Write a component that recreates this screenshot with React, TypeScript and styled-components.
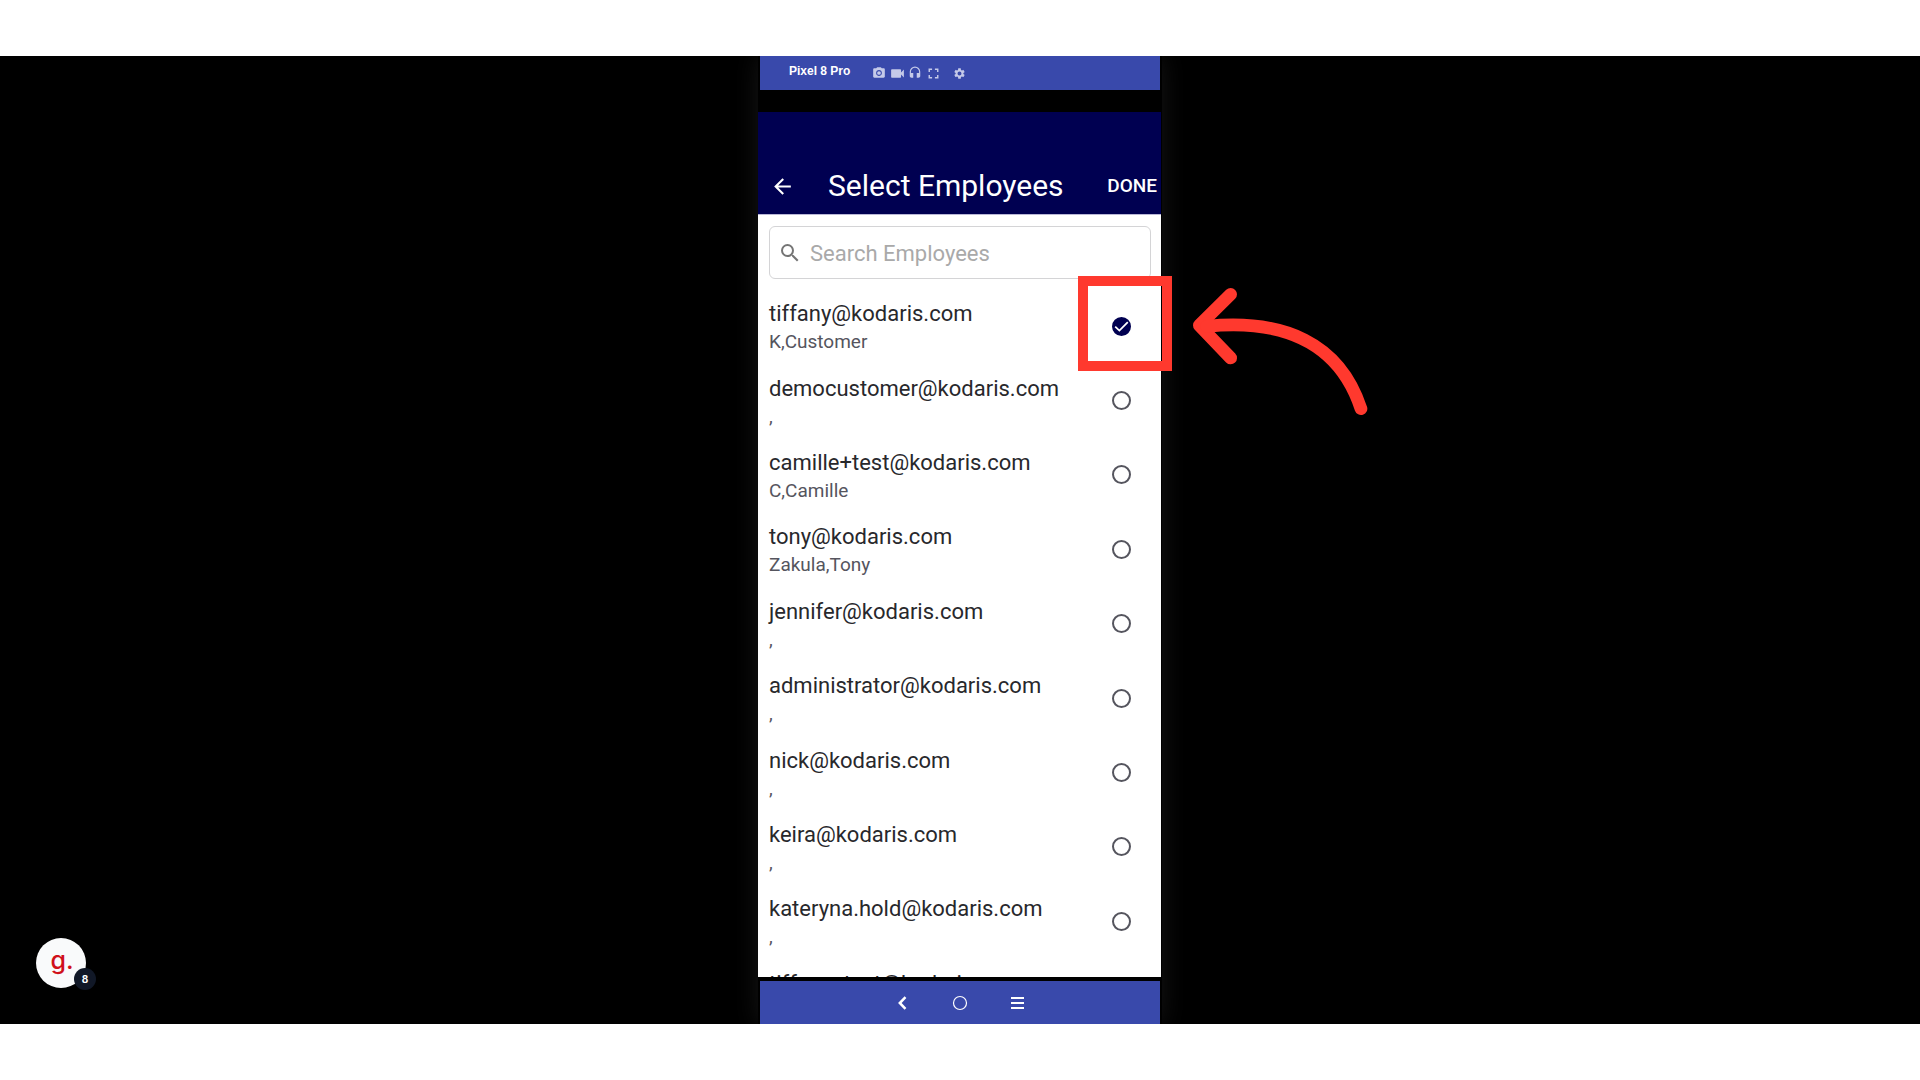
import React, { useState } from "react";
import styled, { createGlobalStyle } from "styled-components";
import {
  MdArrowBack,
  MdFullscreen,
  MdHeadset,
  MdPhotoCamera,
  MdSearch,
  MdSettings,
  MdVideocam,
} from "react-icons/md";

const GlobalStyle = createGlobalStyle`
  *, *::before, *::after { box-sizing: border-box; }
  body { margin: 0; background: #fff; font-family: Roboto, sans-serif; }
  button { border: 0; padding: 0; background: none; color: inherit; font: inherit; cursor: pointer; }
`;

const colors = {
  frame: "#3949ab",
  navy: "#000051",
  accent: "#ff392e",
};

const Page = styled.div`
  height: 100vh;
  padding: 56px 0;
  display: flex;
`;

const Stage = styled.main`
  flex: 1;
  position: relative;
  display: flex;
  justify-content: center;
  background: #000;
`;

const Device = styled.section`
  position: relative;
  width: 404px;
  display: flex;
  flex-direction: column;
  background: #000;
  box-shadow: 0 0 24px #161616;
  clip-path: inset(0 -240px 0 -40px);
`;

const DeviceBar = styled.header`
  height: 34px;
  margin: 0 2px;
  padding-left: 29px;
  display: flex;
  align-items: center;
  gap: 20px;
  background: ${colors.frame};
  color: #fff;
`;

const DeviceName = styled.span`
  padding-bottom: 4px;
  font: bold 12px/14px "Liberation Sans", Arial, sans-serif;
`;

const DeviceTools = styled.div`
  display: flex;
  color: #c5cae9;
`;

const ToolButton = styled.button<{ $spaced?: boolean }>`
  width: 18px;
  height: 18px;
  margin-left: ${(p) => (p.$spaced ? "8px" : "0")};
  display: grid;
  place-items: center;
`;

const AppScreen = styled.div`
  flex: 1;
  min-height: 0;
  margin: 22px 1px 4px 0;
  display: flex;
  flex-direction: column;
  background: #fff;
`;

const AppBar = styled.header`
  height: 103px;
  padding: 46px 4px 0 11px;
  display: flex;
  align-items: center;
  background: ${colors.navy};
  border-bottom: 1px solid #b9b7d6;
  color: #fff;
`;

const BackButton = styled.button`
  width: 26px;
  height: 56px;
  display: grid;
  place-items: center;
`;

const Title = styled.h1`
  flex: 1;
  margin: 0;
  padding-left: 33px;
  font-size: 30px;
  font-weight: 400;
  line-height: 36px;
`;

const DoneButton = styled.button`
  font-size: 19px;
  font-weight: 500;
  line-height: 24px;
`;

const SearchBox = styled.label`
  height: 53px;
  margin: 11px 10px 10px 11px;
  padding: 0 10px 0 8px;
  display: flex;
  align-items: center;
  gap: 8px;
  border: 1px solid #d4d4d6;
  border-radius: 6px;
  color: #757575;
`;

const SearchInput = styled.input`
  flex: 1;
  min-width: 0;
  padding: 2px 0 0;
  border: 0;
  outline: 0;
  background: none;
  color: #28282c;
  font: 400 22px/28px Roboto, sans-serif;
  &::placeholder { color: #a9a9a9; opacity: 1; }
`;

const ListViewport = styled.div`
  flex: 1;
  min-height: 0;
  overflow: hidden;
`;

const EmployeeList = styled.ul`
  height: 744px;
  margin: 0;
  padding: 0 30px 0 11px;
  display: grid;
  grid-auto-rows: 1fr;
  list-style: none;
`;

const EmployeeRow = styled.label`
  height: 100%;
  display: flex;
  align-items: center;
  justify-content: space-between;
  cursor: pointer;
`;

const Email = styled.span`
  display: block;
  font-size: 22px;
  line-height: 32px;
  color: #28282c;
`;

const PersonName = styled.span`
  display: block;
  font-size: 19px;
  line-height: 24px;
  color: #55555e;
`;

const Tick = styled.span`
  display: grid;
  place-items: center;
  & > * { grid-area: 1 / 1; }
  svg { pointer-events: none; }
`;

const TickInput = styled.input`
  appearance: none;
  width: 19px;
  height: 19px;
  margin: 0;
  border: 2px solid #55555e;
  border-radius: 50%;
  &:checked { background: ${colors.navy}; border-color: ${colors.navy}; }
`;

const NavBar = styled.nav`
  height: 43px;
  margin: 0 2px;
  display: flex;
  align-items: center;
  justify-content: center;
  gap: 34px;
  background: ${colors.frame};
  color: #fff;
`;

const NavButton = styled.button`
  width: 24px;
  height: 24px;
  display: grid;
  place-items: center;
`;

const Highlight = styled.div`
  position: absolute;
  left: 320px;
  top: 220px;
  width: 94px;
  height: 95px;
  border: 10px solid ${colors.accent};
  pointer-events: none;
`;

const Arrow = styled.svg`
  position: absolute;
  left: 432px;
  top: 228px;
  pointer-events: none;
`;

const Widget = styled.button`
  position: absolute;
  left: 36px;
  bottom: 36px;
  width: 50px;
  height: 50px;
  border-radius: 50%;
  background: #f9fafb;
`;

const WidgetMark = styled.span`
  display: block;
  padding: 0 0 6px 2px;
  font: 500 25px/30px Inter, sans-serif;
  color: #d0101a;
`;

const WidgetBadge = styled.span`
  position: absolute;
  right: -10px;
  bottom: -2px;
  width: 22px;
  height: 22px;
  border-radius: 50%;
  background: #111827;
  color: #fff;
  font: 700 10px/22px Inter, sans-serif;
  text-align: center;
`;

interface Employee {
  email: string;
  name: string;
}

const employees: Employee[] = [
  { email: "tiffany@kodaris.com", name: "K,Customer" },
  { email: "democustomer@kodaris.com", name: "," },
  { email: "camille+test@kodaris.com", name: "C,Camille" },
  { email: "tony@kodaris.com", name: "Zakula,Tony" },
  { email: "jennifer@kodaris.com", name: "," },
  { email: "administrator@kodaris.com", name: "," },
  { email: "nick@kodaris.com", name: "," },
  { email: "keira@kodaris.com", name: "," },
  { email: "kateryna.hold@kodaris.com", name: "," },
  { email: "tiffany+test@kodaris.com", name: "," },
];

function EmployeeItem({ employee, initial }: { employee: Employee; initial: boolean }) {
  const [checked, setChecked] = useState(initial);
  return (
    <li>
      <EmployeeRow>
        <span>
          <Email>{employee.email}</Email>
          <PersonName>{employee.name}</PersonName>
        </span>
        <Tick>
          <TickInput
            type="checkbox"
            checked={checked}
            onChange={(e) => setChecked(e.target.checked)}
          />
          {checked && (
            <svg width="19" height="19" viewBox="0 0 19 19" fill="none" stroke="#fff" strokeWidth="1.8">
              <path d="M3.2 9.6 7.4 13.6 15.8 5.2" />
            </svg>
          )}
        </Tick>
      </EmployeeRow>
    </li>
  );
}

export default function App() {
  return (
    <Page>
      <GlobalStyle />
      <Stage>
        <Device>
          <DeviceBar>
            <DeviceName>Pixel 8 Pro</DeviceName>
            <DeviceTools>
              <ToolButton aria-label="Take photo"><MdPhotoCamera size={14} /></ToolButton>
              <ToolButton aria-label="Record video"><MdVideocam size={17} /></ToolButton>
              <ToolButton aria-label="Audio"><MdHeadset size={14} /></ToolButton>
              <ToolButton aria-label="Full screen"><MdFullscreen size={17} /></ToolButton>
              <ToolButton aria-label="Settings" $spaced><MdSettings size={13} /></ToolButton>
            </DeviceTools>
          </DeviceBar>
          <AppScreen>
            <AppBar>
              <BackButton aria-label="Back"><MdArrowBack size={25} /></BackButton>
              <Title>Select Employees</Title>
              <DoneButton>DONE</DoneButton>
            </AppBar>
            <SearchBox>
              <MdSearch size={24} />
              <SearchInput type="text" placeholder="Search Employees" aria-label="Search Employees" />
            </SearchBox>
            <ListViewport>
              <EmployeeList>
                {employees.map((employee, i) => (
                  <EmployeeItem key={employee.email} employee={employee} initial={i === 0} />
                ))}
              </EmployeeList>
            </ListViewport>
          </AppScreen>
          <NavBar>
            <NavButton aria-label="Back">
              <svg width="14" height="14" viewBox="0 0 14 14" fill="none" stroke="currentColor" strokeWidth="2.5">
                <path d="M10.5 1.2 4.8 7l5.7 5.8" />
              </svg>
            </NavButton>
            <NavButton aria-label="Home">
              <svg width="16" height="16" viewBox="0 0 16 16" fill="none" stroke="currentColor" strokeWidth="1.2">
                <circle cx="8" cy="8" r="6.5" />
              </svg>
            </NavButton>
            <NavButton aria-label="Menu">
              <svg width="14" height="12" viewBox="0 0 14 12" fill="currentColor">
                <path d="M0 0h13v2H0zM0 5h13v2H0zM0 10h13v2H0z" />
              </svg>
            </NavButton>
          </NavBar>
          <Highlight />
          <Arrow width="180" height="136" viewBox="390 72 540 408" fill="none" stroke={colors.accent} strokeWidth="38" strokeLinecap="round" strokeLinejoin="round" aria-hidden="true">
            <path d="M512 103 418 196 512 294" />
            <path d="M440 199C670 176 838 248 903 446" />
          </Arrow>
        </Device>
        <Widget aria-label="Open help, 8 items">
          <WidgetMark>g.</WidgetMark>
          <WidgetBadge>8</WidgetBadge>
        </Widget>
      </Stage>
    </Page>
  );
}
